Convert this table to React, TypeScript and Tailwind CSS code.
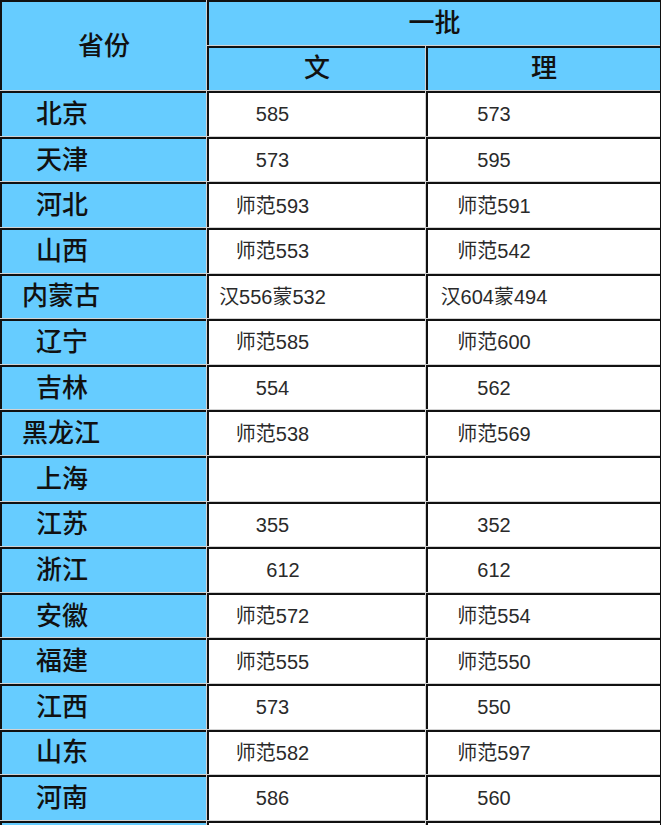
const rows: { name: string; wen: string; li: string; pad?: boolean }[] = [
  { name: '北京', wen: '585', li: '573' },
  { name: '天津', wen: '573', li: '595' },
  { name: '河北', wen: '师范593', li: '师范591' },
  { name: '山西', wen: '师范553', li: '师范542' },
  { name: '内蒙古', wen: '汉556蒙532', li: '汉604蒙494' },
  { name: '辽宁', wen: '师范585', li: '师范600' },
  { name: '吉林', wen: '554', li: '562' },
  { name: '黑龙江', wen: '师范538', li: '师范569' },
  { name: '上海', wen: '', li: '' },
  { name: '江苏', wen: '355', li: '352' },
  { name: '浙江', wen: '612', li: '612', pad: true },
  { name: '安徽', wen: '师范572', li: '师范554' },
  { name: '福建', wen: '师范555', li: '师范550' },
  { name: '江西', wen: '573', li: '550' },
  { name: '山东', wen: '师范582', li: '师范597' },
  { name: '河南', wen: '586', li: '560' },
  // next row only shows its top edge in the frame
  { name: '', wen: '', li: '' },
];

const cell = 'border-t-2 border-l-2 border-[#111] h-[44.6px] flex items-center';
const head = "bg-[#66ccff] text-[26px] font-medium text-[#111] justify-center pb-[6px] font-['Noto_Sans_CJK_SC',sans-serif]";
const data = "bg-white text-[20px] text-[#2a2a2a] font-['Liberation_Sans','Noto_Sans_CJK_SC',sans-serif]";

export default function App() {
  return (
    <div className="bg-white min-h-screen">
      <div className="grid w-fit grid-cols-[206px_218px_234px] gap-px border-r border-[#111] bg-[#d2d2d2]">
        <div className={`${cell} ${head} row-span-2 h-auto`}>省份</div>
        <div className={`${cell} ${head} col-span-2`}>一批</div>
        <div className={`${cell} ${head}`}>文</div>
        <div className={`${cell} ${head}`}>理</div>
        {rows.map((r, i) => (
          <Row key={i} {...r} />
        ))}
      </div>
    </div>
  );
}

function Row({ name, wen, li, pad }: { name: string; wen: string; li: string; pad?: boolean }) {
  return (
    <>
      <div
        className={`${cell} bg-[#66ccff] pb-[6px] text-[26px] font-medium text-[#111] font-['Noto_Sans_CJK_SC',sans-serif] ${
          name.length > 2 ? 'pl-[20px]' : 'pl-[34px]'
        }`}
      >
        {name}
      </div>
      <div className={`${cell} ${data} justify-center pr-[89px] ${pad ? 'pl-[21px]' : ''}`}>{wen}</div>
      <div className={`${cell} ${data} justify-center pr-[100px]`}>{li}</div>
    </>
  );
}
